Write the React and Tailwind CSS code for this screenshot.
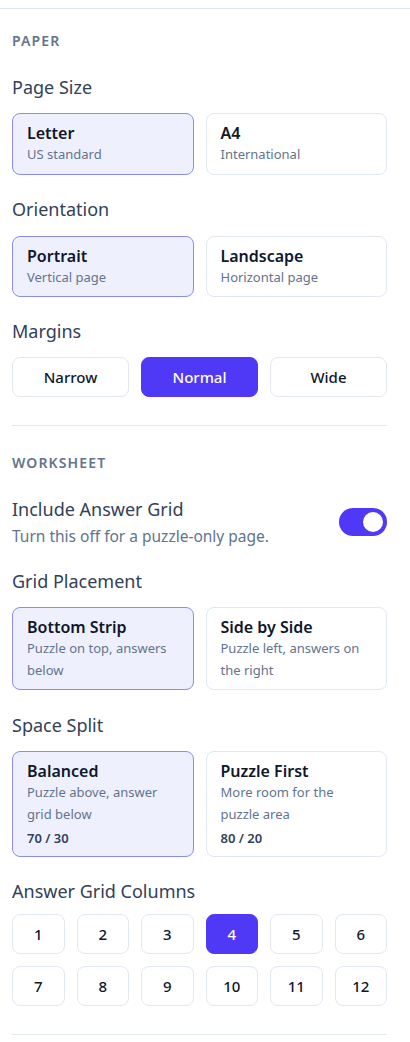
import { useState } from "react";

const font = { fontFamily: '"Noto Sans", "Open Sans", sans-serif' };

const SectionTitle = ({ children }) => (
  <div className="text-[14px] font-semibold uppercase leading-5 tracking-[0.08em] text-slate-500">{children}</div>
);

const Label = ({ children }) => (
  <div className="text-[18px] leading-6 text-slate-700">{children}</div>
);

const OptionCard = ({ title, sub, extra, active, onClick }) => (
  <button
    type="button"
    onClick={onClick}
    className={
      "flex flex-col items-start rounded-lg border px-[14px] py-[8px] text-left " +
      (active ? "border-[#8f8af2] bg-[#eff0fd]" : "border-slate-200 bg-white")
    }
  >
    <span className="text-[16px] font-semibold leading-[22px] text-slate-900">{title}</span>
    <span className="text-[13px] leading-[21.5px] text-slate-500">{sub}</span>
    {extra && <span className="mt-[3px] text-[13px] font-semibold leading-5 text-slate-700">{extra}</span>}
  </button>
);

const Pill = ({ label, active, onClick }) => (
  <button
    type="button"
    onClick={onClick}
    className={
      "h-10 rounded-lg border text-[15px] font-medium " +
      (active ? "border-indigo-600 bg-indigo-600 text-white" : "border-slate-200 bg-white text-slate-900")
    }
  >
    {label}
  </button>
);

export default function App() {
  const [size, setSize] = useState("letter");
  const [orient, setOrient] = useState("portrait");
  const [margin, setMargin] = useState("Normal");
  const [answers, setAnswers] = useState(true);
  const [place, setPlace] = useState("bottom");
  const [split, setSplit] = useState("balanced");
  const [cols, setCols] = useState(4);

  return (
    <div className="min-h-screen bg-white" style={font}>
      <div className="pt-2">
        <div className="h-px w-full bg-slate-200" />
      </div>
      <div className="w-[375px] ml-3">
        <div className="pt-[22px]">
          <SectionTitle>Paper</SectionTitle>
        </div>

        <div className="mt-[24px]">
          <Label>Page Size</Label>
          <div className="mt-[14px] grid grid-cols-2 gap-3">
            <OptionCard title="Letter" sub="US standard" active={size === "letter"} onClick={() => setSize("letter")} />
            <OptionCard title="A4" sub="International" active={size === "a4"} onClick={() => setSize("a4")} />
          </div>
        </div>

        <div className="mt-[22px]">
          <Label>Orientation</Label>
          <div className="mt-[15px] grid grid-cols-2 gap-3">
            <OptionCard title="Portrait" sub="Vertical page" active={orient === "portrait"} onClick={() => setOrient("portrait")} />
            <OptionCard title="Landscape" sub="Horizontal page" active={orient === "landscape"} onClick={() => setOrient("landscape")} />
          </div>
        </div>

        <div className="mt-[22px]">
          <Label>Margins</Label>
          <div className="mt-[14px] grid grid-cols-3 gap-3">
            {["Narrow", "Normal", "Wide"].map((m) => (
              <Pill key={m} label={m} active={margin === m} onClick={() => setMargin(m)} />
            ))}
          </div>
        </div>

        <div className="mt-[28px] h-px bg-slate-200" />

        <div className="pt-[27px]">
          <SectionTitle>Worksheet</SectionTitle>
        </div>

        <div className="mt-[24px] flex items-center justify-between">
          <div>
            <Label>Include Answer Grid</Label>
            <div className="mt-[5px] text-[15.5px] leading-5 text-slate-500">Turn this off for a puzzle-only page.</div>
          </div>
          <button
            type="button"
            onClick={() => setAnswers((v) => !v)}
            className={"relative h-7 w-12 rounded-full " + (answers ? "bg-indigo-600" : "bg-slate-300")}
          >
            <span
              className={
                "absolute top-[4px] h-5 w-5 rounded-full bg-white " + (answers ? "left-[24px]" : "left-[4px]")
              }
            />
          </button>
        </div>

        <div className="mt-[23px]">
          <Label>Grid Placement</Label>
          <div className="mt-[14px] grid grid-cols-2 gap-3">
            <OptionCard
              title="Bottom Strip"
              sub="Puzzle on top, answers below"
              active={place === "bottom"}
              onClick={() => setPlace("bottom")}
            />
            <OptionCard
              title="Side by Side"
              sub="Puzzle left, answers on the right"
              active={place === "side"}
              onClick={() => setPlace("side")}
            />
          </div>
        </div>

        <div className="mt-[23px]">
          <Label>Space Split</Label>
          <div className="mt-[14px] grid grid-cols-2 gap-3">
            <OptionCard
              title="Balanced"
              sub="Puzzle above, answer grid below"
              extra="70 / 30"
              active={split === "balanced"}
              onClick={() => setSplit("balanced")}
            />
            <OptionCard
              title="Puzzle First"
              sub={<>More room for the<br />puzzle area</>}
              extra="80 / 20"
              active={split === "puzzle"}
              onClick={() => setSplit("puzzle")}
            />
          </div>
        </div>

        <div className="mt-[22px]">
          <Label>Answer Grid Columns</Label>
          <div className="mt-[11px] grid grid-cols-6 gap-3">
            {Array.from({ length: 12 }, (_, i) => i + 1).map((n) => (
              <Pill key={n} label={n} active={cols === n} onClick={() => setCols(n)} />
            ))}
          </div>
        </div>

        <div className="mt-[28px] h-px bg-slate-200" />
      </div>
    </div>
  );
}
